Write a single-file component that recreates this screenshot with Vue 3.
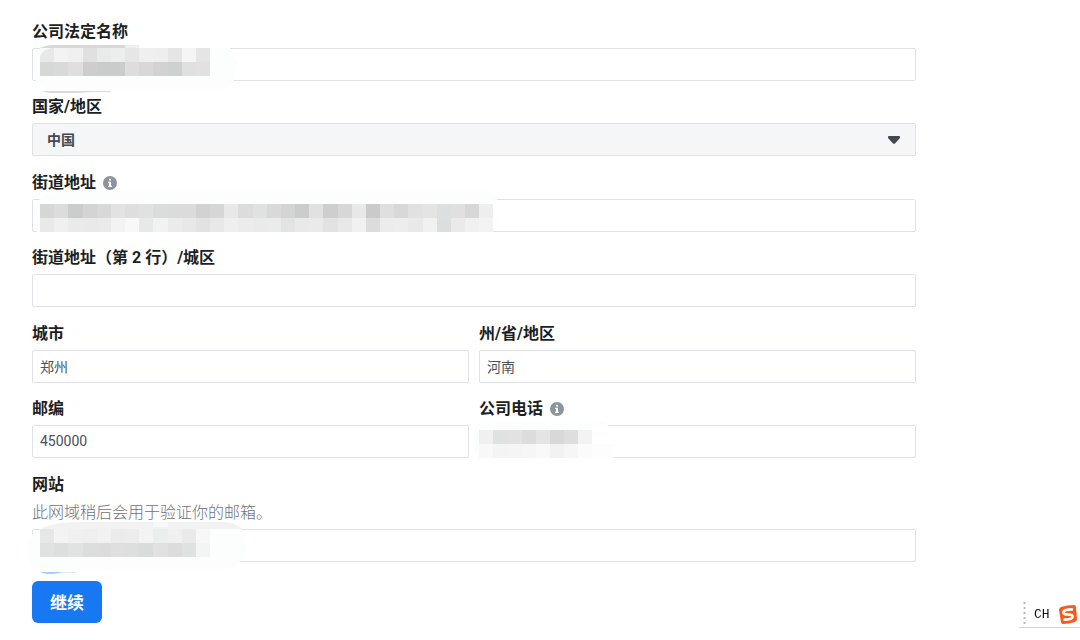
<script setup>
import { ref } from 'vue'

const company = ref('')
const country = ref('中国')
const street = ref('')
const street2 = ref('')
const city = ref('郑州')
const province = ref('河南')
const zip = ref('450000')
const phone = ref('')
const website = ref('')

// Redaction masks: a pale smear below rows of grey tiles, relative to the field's corner.
const build = (x, rows) =>
  rows.flatMap(({ y, h, tones }) =>
    tones.split(' ').map((t, i) => ({
      x: x + Math.round((i * 85) / 6),
      y,
      h,
      w: Math.round(((i + 1) * 85) / 6) - Math.round((i * 85) / 6),
      fill: '#' + (t.length === 2 ? t + t + t : t),
    }))
  )

const companyTiles = build(8, [
  { y: 0, h: 14, tones: 'e8 f3 f0 e0 e8ebea ebeeed e6 ef ee e5 f5 e5' },
  { y: 14, h: 14, tones: 'd6d8d7 d9 df cd cacccb cacccb dd d8 d2 cfd1d0 e0 e1' },
])
const streetTiles = build(8, [
  {
    y: 5,
    h: 14,
    tones:
      'd6 dc cacdcc d2d5d4 d8 e2 de e1 dadddc db db d2 d4d7d6 e8 dc dfe2e1 d9 d4 cbcdcc dfe2e1 ce d7 e6e9e8 ca df d8 e1 e4 dcdfde e0 d7 ee',
  },
  {
    y: 19,
    h: 14,
    tones:
      'e7eae9 eef1f0 ea e9 e8ebea f1f4f3 f8 e6e9e8 f2 e9eceb e8 e2 e8 ef ec ea e9eceb e3 e9 ea e2 e8 f1 dc eaedec ebeeed e7eae9 f1 dcdde1 ea f0 f3',
  },
])
const phoneTiles = build(0, [
  { y: 5, h: 14, tones: 'f0 dfe2e1 e2 dc e4 d8 de f3' },
  { y: 19, h: 14, tones: 'f8 f2f5f4 f5 f6 f9 f2 f6 fafcfb' },
])
const websiteTiles = build(8, [
  { y: 0, h: 14, tones: 'e7 f3 f0 ef f2 eb ec f3 eceeed f0 ea f7' },
  { y: 14, h: 14, tones: 'dfe2e1 dcdfde e0e3e2 dd dc df de d9dcdb e1 dc dfe2e1 f4' },
])
</script>

<template>
  <main class="page">
    <form class="form" @submit.prevent>
      <div class="group">
        <div class="field">
          <div class="label-row"><label for="company">公司法定名称</label></div>
          <div class="control">
            <input id="company" v-model="company" type="text" />
            <svg class="mask" width="206" height="48" aria-hidden="true">
              <path d="M8 0H198L203 14H206L202 32Q195 43 178 43H26Q8 43 2 29V13Q6 2 16-3H108V0Z" fill="#fbfefd" />
              <path d="M8 0Q14-3 22-3H93V0Z" fill="#d8d8d8" />
              <path d="M93-3H107V0H93Z" fill="#eeeeee" />
              <path d="M8 43H79V44H60L45 45H18Z" fill="#d9dad9" />
              <rect v-for="(t, i) in companyTiles" :key="i" :x="t.x" :y="t.y" :width="t.w" :height="t.h" :fill="t.fill" />
              <path d="M8 0H19Q11 2 8 8Z" fill="#f8faf9" />
            </svg>
          </div>
        </div>
        <div class="field">
          <div class="label-row"><label for="country">国家/地区</label></div>
          <div class="control">
            <select id="country" v-model="country">
              <option>中国</option>
            </select>
            <svg class="caret" width="12" height="8" viewBox="0 0 12 8" aria-hidden="true">
              <path d="M1 0H11Q12 0 12 1V2L7 7.500Q6 8 5 7.500L0 2V1Q0 0 1 0Z" fill="#444950" />
            </svg>
          </div>
        </div>
      </div>

      <div class="group">
        <div class="field">
          <div class="label-row">
            <label for="street">街道地址</label>
            <svg class="info" width="14" height="14" viewBox="0 0 14 14" aria-hidden="true">
              <circle cx="7" cy="7" r="7" fill="#8d949e" />
              <path d="M6 2.800H8V4.600H6ZM5 5.800H8V9.800H9V11H5V9.800H6V7H5Z" fill="#fff" />
            </svg>
          </div>
          <div class="control">
            <input id="street" v-model="street" type="text" />
            <svg class="mask" width="466" height="34" aria-hidden="true">
              <path d="M8 0Q20-8 42-8H452Q464-7 466 5V20Q463 32 454 33H5Q1 22 2 5Z" fill="#fbfefd" />
              <rect x="461" y="5" width="5" height="14" fill="#ffffff" />
              <rect v-for="(t, i) in streetTiles" :key="i" :x="t.x" :y="t.y" :width="t.w" :height="t.h" :fill="t.fill" />
            </svg>
          </div>
        </div>
        <div class="field">
          <div class="label-row"><label for="street2">街道地址（第 2 行）/城区</label></div>
          <div class="control"><input id="street2" v-model="street2" type="text" /></div>
        </div>
      </div>

      <div class="group">
        <div class="pair">
          <div class="field">
            <div class="label-row"><label for="city">城市</label></div>
            <div class="control"><input id="city" v-model="city" type="text" /></div>
          </div>
          <div class="field">
            <div class="label-row"><label for="province">州/省/地区</label></div>
            <div class="control"><input id="province" v-model="province" type="text" /></div>
          </div>
        </div>
        <div class="pair">
          <div class="field">
            <div class="label-row"><label for="zip">邮编</label></div>
            <div class="control"><input id="zip" v-model="zip" type="text" /></div>
          </div>
          <div class="field">
            <div class="label-row">
              <label for="phone">公司电话</label>
              <svg class="info" width="14" height="14" viewBox="0 0 14 14" aria-hidden="true">
                <circle cx="7" cy="7" r="7" fill="#8d949e" />
                <path d="M6 2.800H8V4.600H6ZM5 5.800H8V9.800H9V11H5V9.800H6V7H5Z" fill="#fff" />
              </svg>
            </div>
            <div class="control">
              <input id="phone" v-model="phone" type="text" />
              <svg class="mask" width="138" height="34" aria-hidden="true">
                <path d="M-2 0Q4-4 16-4H115Q124-4 129 0L136 19L134 33H2Q-7 28-6 16Q-5 6-2 0Z" fill="#fbfefd" />
                <rect x="113" y="1" width="22" height="18" fill="#ffffff" />
                <rect v-for="(t, i) in phoneTiles" :key="i" :x="t.x" :y="t.y" :width="t.w" :height="t.h" :fill="t.fill" />
              </svg>
            </div>
          </div>
        </div>
      </div>

      <div class="group">
        <div class="field">
          <div class="label-row"><label for="website">网站</label></div>
          <p id="website-hint" class="hint">此网域稍后会用于验证你的邮箱。</p>
          <div class="control">
            <input id="website" v-model="website" type="text" aria-describedby="website-hint" />
            <svg class="mask" width="216" height="46" aria-hidden="true">
              <path d="M0 6Q14-6 40-7H190Q212-6 215 14Q215 27 205 36Q198 41 186 41H50L8 43Q-5 36-5 22Q-4 13 0 6Z" fill="#fcfefd" />
              <path d="M8 0Q22-7 50-7H192Q205-6 210 0Z" fill="#f1f2f1" />
              <path d="M121-7H136V-2H121Z" fill="#f8f8f8" />
              <path d="M8 43H31Q26 45 19 45Q12 45 8 43Z" fill="#a9cbf9" />
              <path d="M31 43H44V44H29Z" fill="#dceafd" />
              <rect v-for="(t, i) in websiteTiles" :key="i" :x="t.x" :y="t.y" :width="t.w" :height="t.h" :fill="t.fill" />
            </svg>
          </div>
        </div>
      </div>

      <button class="submit" type="submit">继续</button>
    </form>

    <aside class="ime">
      <svg width="3" height="24" viewBox="0 0 3 24" aria-hidden="true">
        <path d="M1.500 0V24" stroke="#b9b9b9" stroke-width="2" stroke-dasharray="2 3" />
      </svg>
      <span class="ime-text">CH</span>
      <svg width="20" height="21" viewBox="0 0 20 21" aria-hidden="true">
        <path d="M3 3Q9 1 16 1Q18 1 18 3L19 15Q19 17 17 18Q11 20 5 20Q3 20 3 18L1 6Q1 4 3 3Z" fill="#f95a1e" />
        <path d="M15 5.500Q11 5 8 6Q5 7 5.500 9Q6 10.500 10 10.500Q14.500 10.500 14.500 12.500Q14.500 14.500 11 15.200Q8 15.800 5.500 15.500" fill="none" stroke="#fff" stroke-width="2.600" />
      </svg>
    </aside>
  </main>
</template>

<style>
body {
  margin: 0;
  background: #fff;
}
</style>

<style scoped>
.page {
  box-sizing: border-box;
  min-height: 100vh;
  padding: 20px 32px 16px;
  font-family: Roboto, 'Noto Sans CJK SC', sans-serif;
  color: #1c1e21;
}
.form {
  display: flex;
  flex-direction: column;
  gap: 13px;
  max-width: 884px;
}
.group {
  display: flex;
  flex-direction: column;
  gap: 12px;
}
.pair {
  display: grid;
  grid-template-columns: 1fr 1fr;
  gap: 10px;
}
.label-row {
  display: flex;
  align-items: center;
  gap: 7px;
  height: 24px;
  margin-bottom: 4px;
  font-size: 16px;
  font-weight: 700;
  line-height: 24px;
}
.field {
  min-width: 0;
  padding-bottom: 2px;
}
.info {
  flex: none;
}
.control {
  position: relative;
}
input,
select {
  display: block;
  box-sizing: border-box;
  width: 100%;
  height: 33px;
  margin: 0;
  padding: 0 7px 2px;
  border: 1px solid #dfe1e4;
  border-radius: 2px;
  background: #fff;
  color: #4b4f56;
  font-family: inherit;
  font-size: 14px;
}
select {
  appearance: none;
  padding: 0 14px;
  background: #f5f6f7;
  color: #444950;
  font-weight: 700;
}
.caret {
  position: absolute;
  top: 13px;
  right: 16px;
  pointer-events: none;
}
.mask {
  position: absolute;
  top: 0;
  left: 0;
  overflow: visible;
  pointer-events: none;
}
.hint {
  margin: 0 0 4px;
  color: #6f7276;
  font-size: 16px;
  font-weight: 300;
  line-height: 24px;
}
.submit {
  align-self: flex-start;
  height: 42px;
  margin-top: 4px;
  padding: 0 18px 1px;
  border: 0;
  border-radius: 6px;
  background: #1877f2;
  color: #fff;
  font-family: inherit;
  font-size: 17px;
  font-weight: 700;
}
.ime {
  position: fixed;
  right: 0;
  bottom: 12px;
  display: flex;
  align-items: center;
  box-sizing: border-box;
  width: 61px;
  padding: 0 2px 1px 4px;
  border-bottom: 1px solid #d4d4d4;
}
.ime-text {
  flex: 1;
  padding-left: 8px;
  color: #111;
  font-family: 'Liberation Mono', monospace;
  font-size: 13px;
}
</style>
